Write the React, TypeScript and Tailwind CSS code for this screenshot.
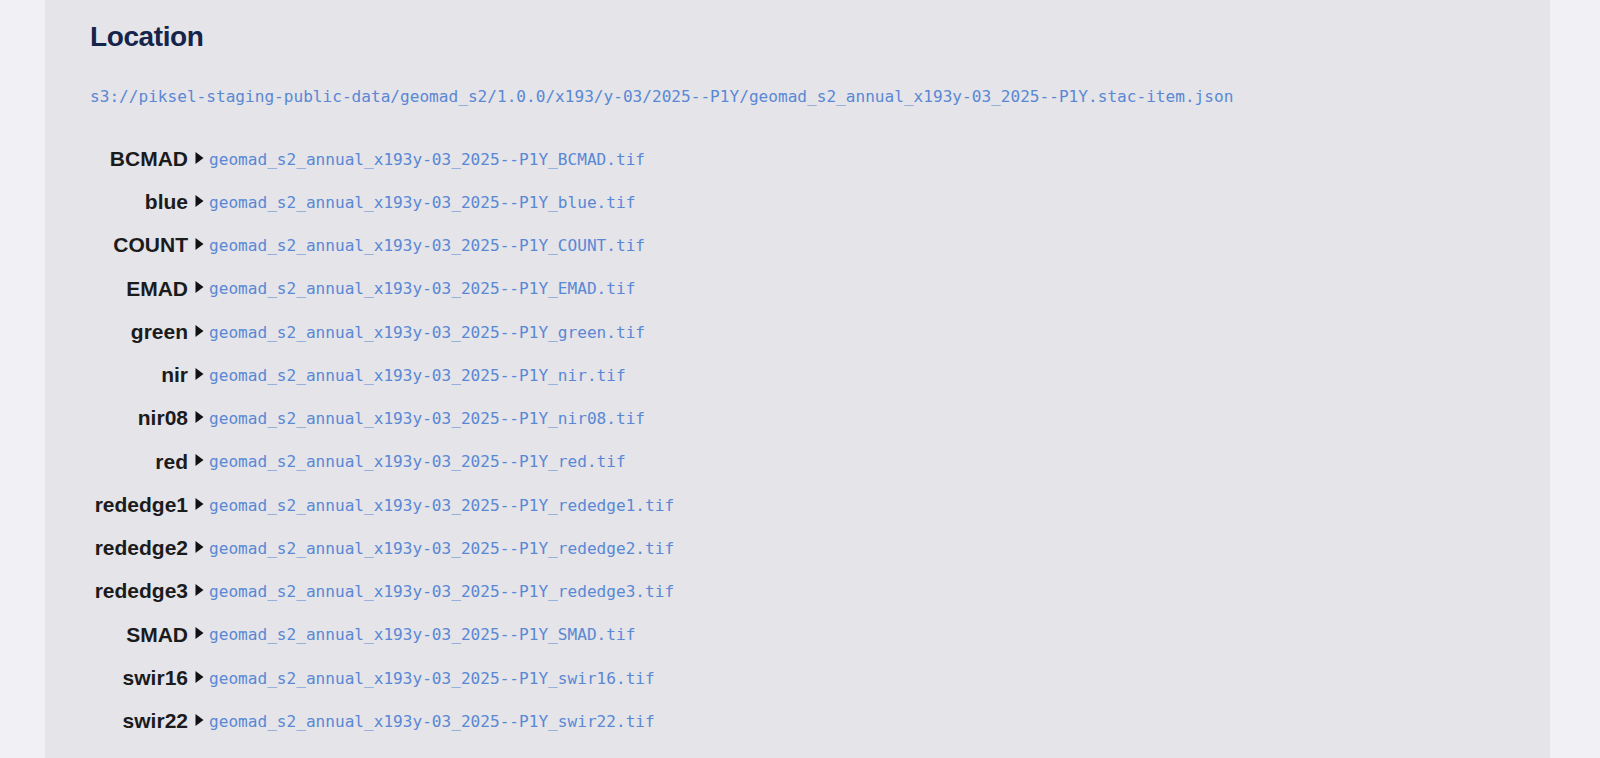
import React from 'react';

interface Asset {
  band: string;
  file: string;
}

const prefix = 'geomad_s2_annual_x193y-03_2025--P1Y';

const bands = [
  'BCMAD',
  'blue',
  'COUNT',
  'EMAD',
  'green',
  'nir',
  'nir08',
  'red',
  'rededge1',
  'rededge2',
  'rededge3',
  'SMAD',
  'swir16',
  'swir22',
];

const assets: Asset[] = bands.map((band) => ({ band, file: `${prefix}_${band}.tif` }));

const Caret: React.FC = () => (
  <svg width="9" height="12" viewBox="0 0 9 12" className="ml-[7px] mr-[5px] shrink-0 self-center translate-y-[-1px]">
    <polygon points="0.5,0 8.5,6 0.5,12" fill="#111111" />
  </svg>
);

const App: React.FC = () => {
  return (
    <div className="min-h-screen bg-[#f0f0f5] font-['Liberation_Sans',Arial,sans-serif]">
      <div className="ml-[45px] w-[1505px] min-h-[758px] bg-[#e4e4e9] pl-[45px] pt-[21px]">
        <h1 className="text-[28px] leading-[32px] font-bold tracking-[-0.4px] text-[#15244a]">Location</h1>

        <div className="mt-[32px] font-['DejaVu_Sans_Mono',monospace] text-[16.1px] leading-[24px] text-[#5a88d4]">
          s3://piksel-staging-public-data/geomad_s2/1.0.0/x193/y-03/2025--P1Y/{prefix}.stac-item.json
        </div>

        <div className="mt-[28px]">
          {assets.map((asset) => (
            <div key={asset.band} className="flex h-[43.25px] items-center">
              <span className="w-[98px] shrink-0 text-right text-[21px] font-bold text-[#1b1b1b]">{asset.band}</span>
              <Caret />
              <a className="font-['DejaVu_Sans_Mono',monospace] text-[16.1px] text-[#5a88d4] translate-y-[1px]">
                {asset.file}
              </a>
            </div>
          ))}
        </div>
      </div>
    </div>
  );
};

export default App;
